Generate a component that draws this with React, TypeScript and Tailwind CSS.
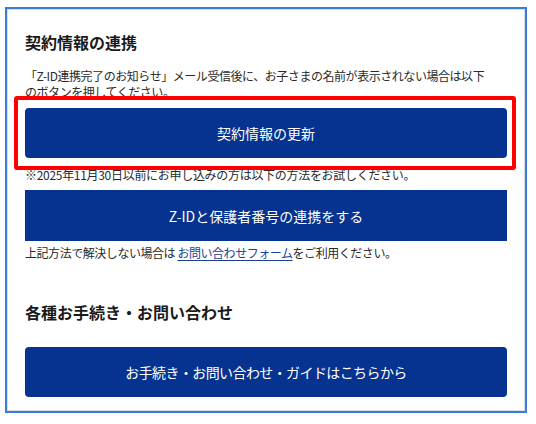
import React from "react";

const font = { fontFamily: '"Noto Sans CJK JP", "Noto Sans", sans-serif' };

export default function App() {
  return (
    <div className="w-[536px] h-[424px] bg-white pt-[7px] pl-[5px]" style={font}>
      <div className="w-[522px] h-[406px] border-2 border-[#3b7bd9]">
        <div className="relative h-full border border-[#d9dde4] px-[17px] pt-[20px] flex flex-col">
          <h2 className="text-[16px] leading-[24px] font-bold text-[#1a1a1a]">契約情報の連携</h2>
          <p className="mt-[14px] text-[12px] leading-[16px] text-[#2a2a2a] tracking-[-0.45px] whitespace-nowrap">
            「Z-ID連携完了のお知らせ」メール受信後に、お子さまの名前が表示されない場合は以下
            <br />
            のボタンを押してください。
          </p>
          <button className="mt-[8px] h-[50px] w-full rounded-[4px] bg-[#06338f] text-white text-[14px] leading-[20px]">
            契約情報の更新
          </button>
          <p className="mt-[9px] text-[12px] leading-[16px] text-[#2a2a2a] tracking-[-0.3px] whitespace-nowrap">
            ※2025年11月30日以前にお申し込みの方は以下の方法をお試しください。
          </p>
          <button className="mt-[7px] h-[51px] w-full bg-[#06338f] text-white text-[14px] leading-[20px]">
            Z-IDと保護者番号の連携をする
          </button>
          <p className="mt-[4px] text-[12px] leading-[16px] text-[#2a2a2a] tracking-[-0.45px] whitespace-nowrap">
            上記方法で解決しない場合は{" "}
            <a href="#" className="text-[#1c3f94] underline underline-offset-2">お問い合わせフォーム</a>
            をご利用ください。
          </p>
          <h2 className="mt-[39px] text-[16px] leading-[24px] font-bold text-[#1a1a1a]">各種お手続き・お問い合わせ</h2>
          <button className="mt-[23px] h-[50px] w-full rounded-[4px] bg-[#06338f] text-white text-[14px] leading-[20px] tracking-[-0.6px]">
            お手続き・お問い合わせ・ガイドはこちらから
          </button>
          <div className="absolute left-[6px] top-[86px] w-[502px] h-[74px] border-4 border-[#ff0000] rounded-[3px] pointer-events-none" />
        </div>
      </div>
    </div>
  );
}
